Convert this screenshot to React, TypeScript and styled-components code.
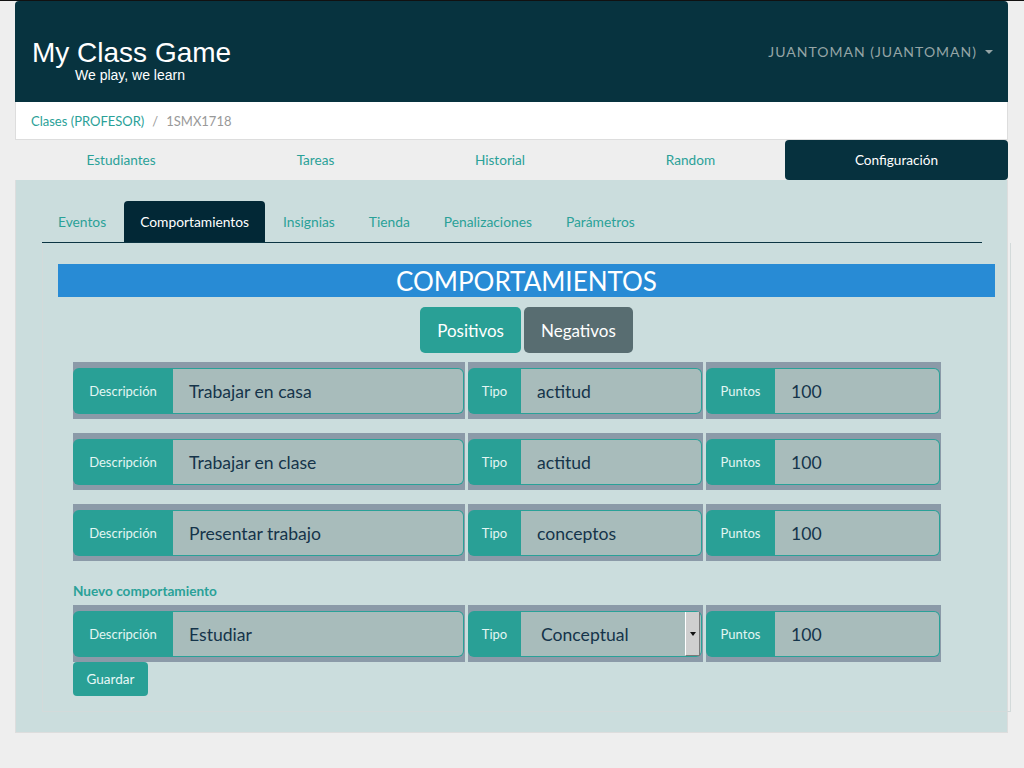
import React from "react";
import styled, { createGlobalStyle } from "styled-components";

const GlobalStyle = createGlobalStyle`
  html, body {
    margin: 0;
    padding: 0;
    background-color: #eeeeee;
  }
  body {
    border-top: 1px solid #111111;
    font-family: "Lato", "Open Sans", sans-serif;
  }
`;

const Container = styled.div`
  width: 993px;
  margin-left: 15px;
`;

const Header = styled.div`
  height: 101px;
  background-color: #07333f;
  border-radius: 4px 4px 0 0;
  display: flex;
  justify-content: space-between;
  align-items: flex-start;
  padding: 0 15px 0 17px;
  box-sizing: border-box;
`;

const Brand = styled.div`
  display: flex;
  flex-direction: column;
  padding-top: 38px;
  font-family: "Liberation Sans", Arial, sans-serif;
  color: #ffffff;
`;

const BrandTitle = styled.div`
  font-size: 28px;
  line-height: 28px;
`;

const BrandSub = styled.div`
  font-size: 14px;
  line-height: 14px;
  margin-left: 43px;
  margin-top: 1px;
`;

const User = styled.div`
  margin-top: 42px;
  font-size: 14px;
  letter-spacing: 1px;
  color: #95a5a6;
  display: flex;
  align-items: center;
  gap: 8px;
`;

const Caret = styled.span`
  width: 0;
  height: 0;
  border-left: 4px solid transparent;
  border-right: 4px solid transparent;
  border-top: 4px solid #95a5a6;
`;

const Breadcrumb = styled.div`
  height: 38px;
  background-color: #ffffff;
  border: 1px solid #dddddd;
  border-top: none;
  box-sizing: border-box;
  display: flex;
  align-items: center;
  padding: 0 15px;
  font-size: 13px;
  color: #999999;
  gap: 8px;
`;

const Crumb = styled.span`
  color: #2aa198;
`;

const MainTabs = styled.div`
  display: grid;
  grid-template-columns: 212px 177px 192px 189px 1fr;
  height: 40px;
  background-color: #eeeeee;
`;

const MainTab = styled.div<{ $active?: boolean }>`
  display: flex;
  align-items: center;
  justify-content: center;
  font-size: 13.6px;
  border-radius: 4px;
  color: ${(p) => (p.$active ? "#ffffff" : "#2aa198")};
  background-color: ${(p) => (p.$active ? "#06313e" : "transparent")};
`;

const Content = styled.div`
  background-color: #cbdddd;
  border: 1px solid #dddddd;
  border-top: none;
  padding: 21px 0 20px 26px;
`;

const SubTabs = styled.div`
  width: 940px;
  display: flex;
  border-bottom: 1px solid #0b3442;
`;

const SubTab = styled.div<{ $active?: boolean }>`
  height: 41px;
  padding: 0 16px;
  margin-right: 2px;
  display: flex;
  align-items: center;
  font-size: 13.8px;
  border-radius: 4px 4px 0 0;
  color: ${(p) => (p.$active ? "#ffffff" : "#2aa198")};
  background-color: ${(p) => (p.$active ? "#022836" : "transparent")};
`;

const Panel = styled.div`
  width: 969px;
  box-sizing: border-box;
  border: 1px solid #d3dada;
  border-top: none;
  padding: 21px 15px 15px 15px;
`;

const Heading = styled.div`
  height: 33px;
  background-color: #288bd5;
  color: #ffffff;
  font-size: 26px;
  display: flex;
  align-items: center;
  justify-content: center;
`;

const Toggle = styled.div`
  display: flex;
  justify-content: center;
  gap: 3px;
  margin-top: 10px;
`;

const ToggleButton = styled.div<{ $dark?: boolean }>`
  height: 46px;
  padding: 0 17px;
  border-radius: 5px;
  display: flex;
  align-items: center;
  font-size: 17px;
  color: #ffffff;
  background-color: ${(p) => (p.$dark ? "#586d71" : "#29a096")};
`;

const Rows = styled.div`
  margin: 9px 0 0 15px;
  width: 868px;
`;

const Row = styled.div<{ $gap?: number }>`
  display: grid;
  grid-template-columns: 392px 235px 235px;
  column-gap: 3px;
  margin-bottom: ${(p) => p.$gap ?? 14}px;
`;

const Cell = styled.div`
  background-color: #8b9aa8;
  padding: 6px 1px 5px 0;
`;

const Group = styled.div`
  display: flex;
  height: 46px;
`;

const Addon = styled.div<{ $w: number }>`
  width: ${(p) => p.$w}px;
  flex: none;
  background-color: #29a096;
  color: #e2f6f3;
  font-size: 13px;
  display: flex;
  align-items: center;
  justify-content: center;
  border-radius: 6px 0 0 6px;
`;

const Field = styled.div<{ $pad?: number }>`
  flex: 1;
  position: relative;
  background-color: #a8bcbb;
  border: 1px solid #2aa198;
  border-left: none;
  border-radius: 0 6px 6px 0;
  display: flex;
  align-items: center;
  padding-left: ${(p) => p.$pad ?? 16}px;
  font-size: 17.6px;
  color: #15344a;
`;

const SelectButton = styled.div`
  position: absolute;
  right: 1px;
  top: 0;
  bottom: 0;
  width: 13px;
  background-color: #cfcfcf;
  border-left: 1px solid #ffffff;
  border-right: 1px solid #7a7a7a;
  border-bottom: 1px solid #7a7a7a;
  display: flex;
  align-items: center;
  justify-content: center;
  &::after {
    content: "";
    border-left: 3px solid transparent;
    border-right: 3px solid transparent;
    border-top: 4px solid #111111;
  }
`;

const NewLabel = styled.div`
  font-size: 13.6px;
  font-weight: 700;
  color: #2aa198;
  margin: 22px 0 6px 0;
`;

const SaveButton = styled.div`
  width: 75px;
  height: 34px;
  border-radius: 4px;
  background-color: #29a096;
  color: #e8f8f6;
  font-size: 13.5px;
  display: flex;
  align-items: center;
  justify-content: center;
`;

const behaviours = [
  { desc: "Trabajar en casa", tipo: "actitud", puntos: "100" },
  { desc: "Trabajar en clase", tipo: "actitud", puntos: "100" },
  { desc: "Presentar trabajo", tipo: "conceptos", puntos: "100" },
];

const mainTabs = ["Estudiantes", "Tareas", "Historial", "Random", "Configuración"];
const subTabs = ["Eventos", "Comportamientos", "Insignias", "Tienda", "Penalizaciones", "Parámetros"];

const App = () => {
  return (
    <>
      <GlobalStyle />
      <Container>
        <Header>
          <Brand>
            <BrandTitle>My Class Game</BrandTitle>
            <BrandSub>We play, we learn</BrandSub>
          </Brand>
          <User>
            JUANTOMAN (JUANTOMAN)
            <Caret />
          </User>
        </Header>
        <Breadcrumb>
          <Crumb>Clases (PROFESOR)</Crumb>
          <span>/</span>
          <span>1SMX1718</span>
        </Breadcrumb>
        <MainTabs>
          {mainTabs.map((t) => (
            <MainTab key={t} $active={t === "Configuración"}>
              {t}
            </MainTab>
          ))}
        </MainTabs>
        <Content>
          <SubTabs>
            {subTabs.map((t) => (
              <SubTab key={t} $active={t === "Comportamientos"}>
                {t}
              </SubTab>
            ))}
          </SubTabs>
          <Panel>
            <Heading>COMPORTAMIENTOS</Heading>
            <Toggle>
              <ToggleButton>Positivos</ToggleButton>
              <ToggleButton $dark>Negativos</ToggleButton>
            </Toggle>
            <Rows>
              {behaviours.map((b) => (
                <Row key={b.desc}>
                  <Cell>
                    <Group>
                      <Addon $w={100}>Descripción</Addon>
                      <Field>{b.desc}</Field>
                    </Group>
                  </Cell>
                  <Cell>
                    <Group>
                      <Addon $w={53}>Tipo</Addon>
                      <Field>{b.tipo}</Field>
                    </Group>
                  </Cell>
                  <Cell>
                    <Group>
                      <Addon $w={69}>Puntos</Addon>
                      <Field>{b.puntos}</Field>
                    </Group>
                  </Cell>
                </Row>
              ))}
              <NewLabel>Nuevo comportamiento</NewLabel>
              <Row $gap={0}>
                <Cell>
                  <Group>
                    <Addon $w={100}>Descripción</Addon>
                    <Field>Estudiar</Field>
                  </Group>
                </Cell>
                <Cell>
                  <Group>
                    <Addon $w={53}>Tipo</Addon>
                    <Field $pad={20}>
                      Conceptual
                      <SelectButton />
                    </Field>
                  </Group>
                </Cell>
                <Cell>
                  <Group>
                    <Addon $w={69}>Puntos</Addon>
                    <Field>100</Field>
                  </Group>
                </Cell>
              </Row>
              <SaveButton>Guardar</SaveButton>
            </Rows>
          </Panel>
        </Content>
      </Container>
    </>
  );
};

export default App;
